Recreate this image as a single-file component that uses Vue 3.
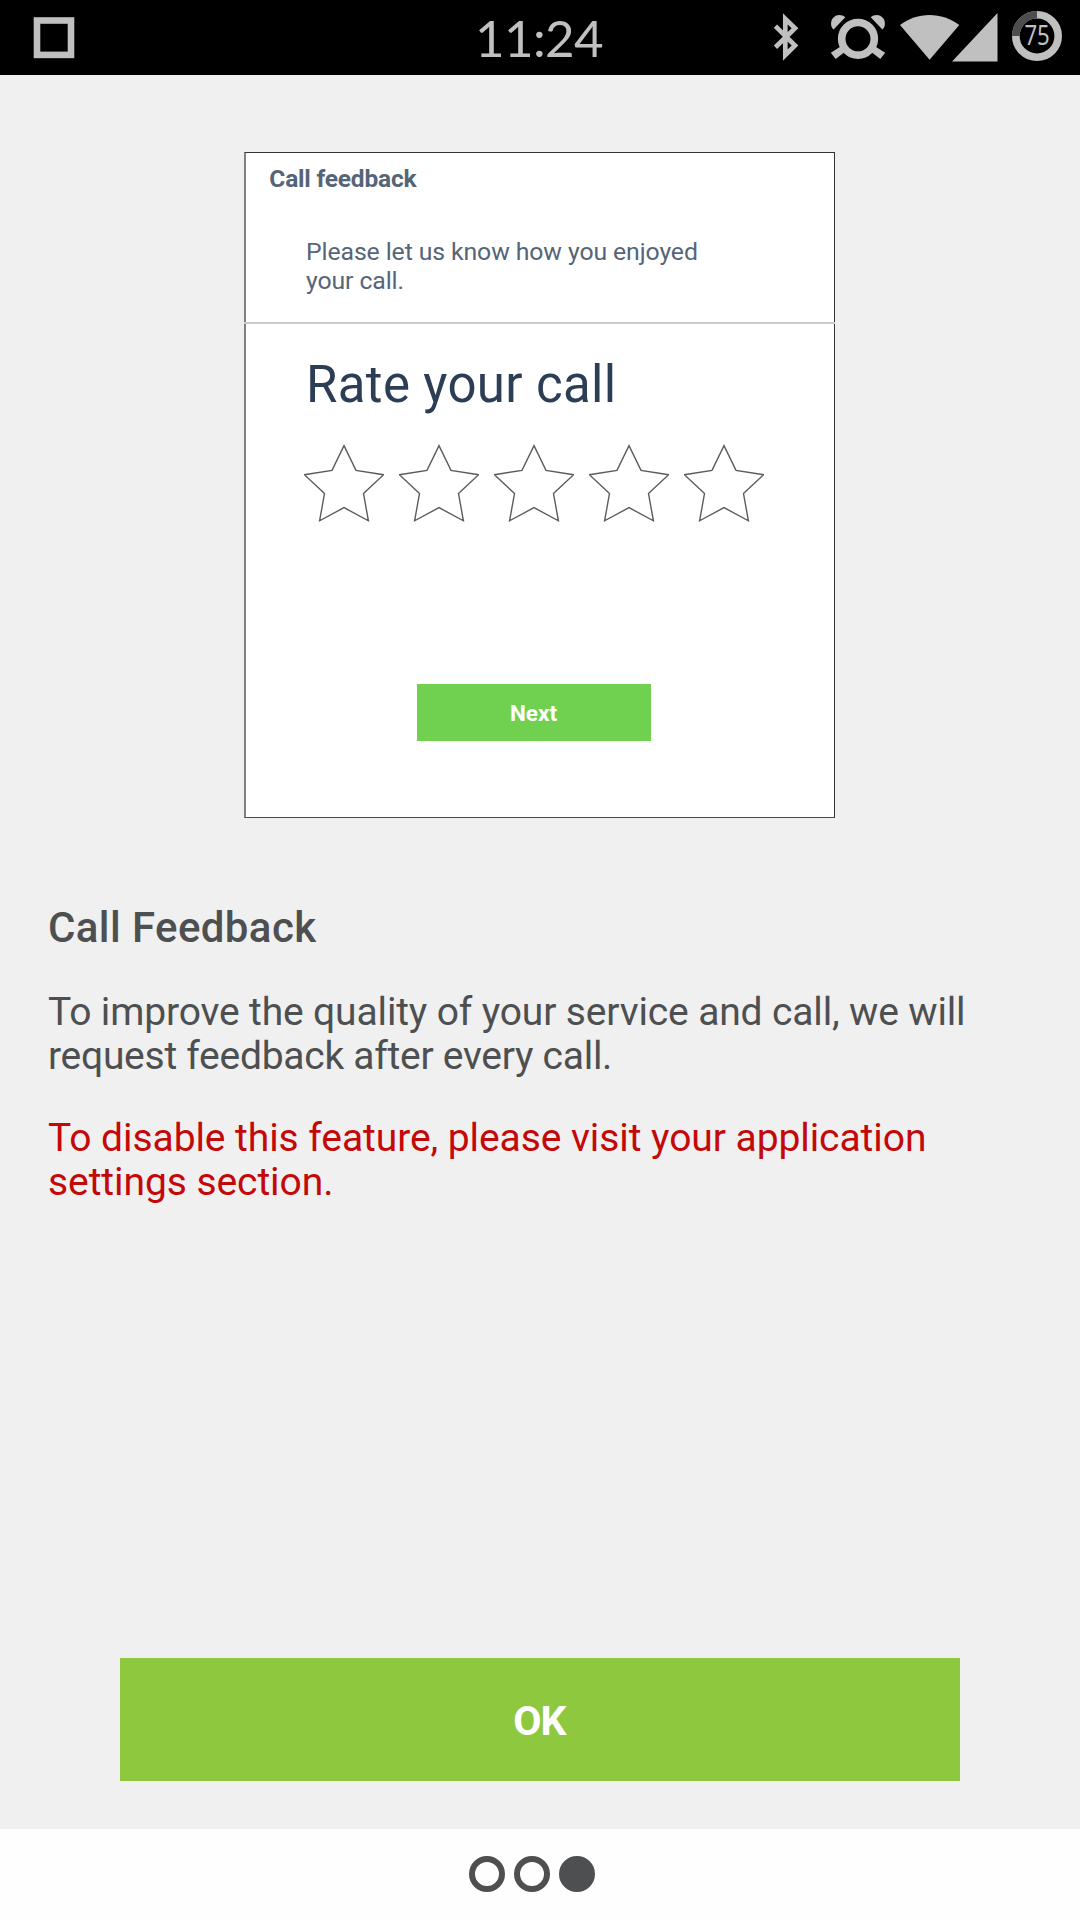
<script setup>
const stars = [0, 1, 2, 3, 4]
const starPoints = '40,5.6 52,30.4 79.6,34.7 59.5,53.5 64.4,80.8 40,67.6 15.6,80.8 20.5,53.5 0.4,34.7 28,30.4'
const pages = [{ id: 1, active: false }, { id: 2, active: false }, { id: 3, active: true }]
</script>

<template>
  <div class="screen">
    <header class="status-bar">
      <div class="side">
        <svg class="notification" width="42" height="42" viewBox="0 0 42 42">
          <rect x="4" y="3.5" width="34" height="34.4" fill="none" stroke="#c0c0c0" stroke-width="6.6" />
        </svg>
      </div>
      <time class="clock">11:24</time>
      <div class="side">
        <svg class="indicators" width="330" height="75" viewBox="0 0 330 75">
          <g fill="none" stroke="#c0c0c0" stroke-width="4.7">
            <path d="M25.4 26.2 45 45.5 35.3 55.2V18.8L45 28.2 25.4 47.2" stroke-miterlimit="10" />
          </g>
          <circle cx="108" cy="38.8" r="16.3" fill="none" stroke="#c0c0c0" stroke-width="7.6" />
          <g fill="#c0c0c0">
            <path d="M83.6 29.5C80.6 27.3 80.2 21.5 82.8 18.2 85.5 14.4 91.5 13.6 95.3 17.3Z" />
            <path d="M132.4 29.5C135.4 27.3 135.8 21.5 133.2 18.2 130.5 14.4 124.5 13.6 120.7 17.3Z" />
            <path d="M93 45 98 49.5 85.7 59 80.8 52.8Z" />
            <path d="M123 45 118 49.5 130.3 59 135.2 52.8Z" />
            <path d="M150 25C167 11.5 192 11.5 209.3 25L179.6 59.8Z" />
            <path d="M247.5 13V61.5H202Z" />
          </g>
          <circle cx="287" cy="36" r="21.2" fill="none" stroke="#c0c0c0" stroke-width="7.6" />
          <path d="M265.8 36A21.2 21.2 0 0 1 287 14.8" fill="none" stroke="#4d4d4d" stroke-width="7.6" />
          <text class="battery" x="274.4" y="45.2" textLength="25.4" lengthAdjust="spacingAndGlyphs">75</text>
        </svg>
      </div>
    </header>

    <main class="content">
      <section class="preview">
        <div class="preview-head">
          <h2>Call feedback</h2>
          <p>Please let us know how you enjoyed<br>your call.</p>
        </div>
        <h3>Rate your call</h3>
        <div class="stars">
          <svg v-for="s in stars" :key="s" width="80" height="86" viewBox="0 0 80 86">
            <polygon :points="starPoints" fill="none" stroke="#5c5c5c" stroke-width="1.4" />
          </svg>
        </div>
        <div class="next">Next</div>
      </section>

      <section class="copy">
        <h1>Call Feedback</h1>
        <p><span class="first">To improve the quality of your service and call, we will</span><br><span class="second">request feedback after every call.</span></p>
        <p class="warning">To disable this feature, please visit your application<br>settings section.</p>
      </section>

      <button class="ok" type="button">OK</button>
    </main>

    <footer class="pager">
      <span v-for="p in pages" :key="p.id" class="dot" :class="{ active: p.active }"></span>
    </footer>
  </div>
</template>

<style>
body {
  margin: 0;
}
</style>

<style scoped>
.screen {
  display: flex;
  flex-direction: column;
  width: 1080px;
  height: 1920px;
  overflow: hidden;
  background: #f0f0f0;
  color: #4d4f51;
  font-family: Roboto, sans-serif;
}

h1,
h2,
h3,
p {
  margin: 0;
}

svg {
  display: block;
}

.status-bar {
  display: flex;
  align-items: center;
  height: 75px;
  background: #000;
}

.side {
  display: flex;
  flex: 1;
  height: 75px;
}

.side:last-child {
  justify-content: flex-end;
}

.notification {
  margin: 17px 0 0 33px;
}

.clock {
  padding: 1px 2px 0 0;
  color: #c0c0c0;
  font: 51px/60px Lato, sans-serif;
  letter-spacing: -0.6px;
}

.battery {
  fill: #c0c0c0;
  font: 26.5px "Noto Sans", sans-serif;
}

.content {
  display: flex;
  flex: 1;
  flex-direction: column;
}

.preview {
  display: flex;
  flex-direction: column;
  box-sizing: border-box;
  width: 591px;
  height: 666px;
  margin: 77px 0 0 244px;
  border: 1px solid #333436;
  border-left: 2px solid #808183;
  border-bottom-color: #4c4c4e;
  background: #fff;
}

.preview-head {
  box-sizing: border-box;
  height: 171px;
  margin: 0 -1px 0 -2px;
  padding: 11px 0 0 25.3px;
  border-bottom: 2px solid #cbcbcb;
  color: #556577;
}

h2 {
  font-size: 24.5px;
  font-weight: 700;
  line-height: 30px;
  letter-spacing: -0.2px;
}

.preview-head p {
  margin: 43px 0 0 36.7px;
  font-size: 24.8px;
  line-height: 29px;
  letter-spacing: -0.1px;
}

h3 {
  margin: 31px 0 0 60px;
  color: #2c3e55;
  font-size: 51px;
  font-weight: 400;
  line-height: 60px;
  letter-spacing: 0.35px;
}

.stars {
  display: flex;
  gap: 14.95px;
  margin: 25px 0 0 58px;
}

.next {
  width: 234px;
  height: 57px;
  box-sizing: border-box;
  margin: 158px 0 0 171px;
  padding: 1px 1px 0 0;
  background: #70d050;
  color: #fff;
  font-size: 22.5px;
  font-weight: 700;
  line-height: 56px;
  text-align: center;
}

.copy {
  margin: 85px 48px 0;
}

h1 {
  font-size: 42px;
  font-weight: 500;
  line-height: 50px;
  letter-spacing: 0.4px;
}

.copy p {
  margin-top: 37px;
  font-size: 39px;
  line-height: 44px;
  white-space: nowrap;
}

.first {
  letter-spacing: -0.145px;
}

.second {
  letter-spacing: -0.27px;
}

.copy .warning {
  margin-top: 38px;
  color: #c40808;
  letter-spacing: -0.07px;
}

.ok {
  width: 840px;
  height: 123px;
  margin: auto auto 48px;
  padding: 2px 1px 0 0;
  border: 0;
  background: #8ec83f;
  color: #fff;
  font: 700 41px Roboto, sans-serif;
  letter-spacing: -0.8px;
}

.pager {
  display: flex;
  gap: 9px;
  box-sizing: border-box;
  height: 91px;
  padding: 27px 0 0 469.4px;
  background: #fefefe;
}

.dot {
  box-sizing: border-box;
  width: 36px;
  height: 36px;
  border: 6px solid #4d4f51;
  border-radius: 50%;
}

.dot.active {
  background: #4d4f51;
}
</style>
